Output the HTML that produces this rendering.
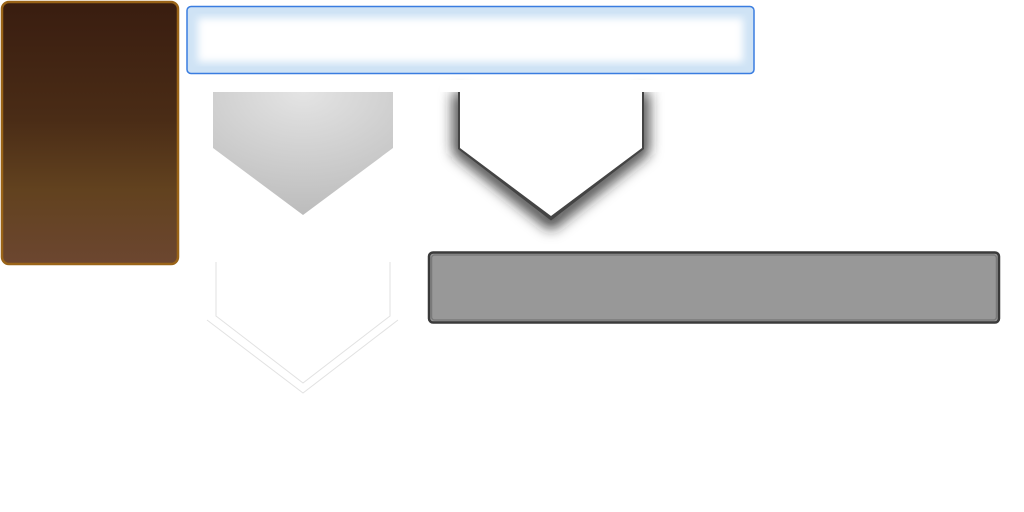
<!DOCTYPE html>
<html><head><meta charset="utf-8"><style>
html,body{margin:0;padding:0;background:#fff;width:1024px;height:512px;overflow:hidden}
</style></head><body>
<svg width="1024" height="512" viewBox="0 0 1024 512" xmlns="http://www.w3.org/2000/svg">
<defs>
<linearGradient id="br" x1="0" y1="0" x2="0" y2="1">
<stop offset="0" stop-color="#391d10"/>
<stop offset="0.45" stop-color="#4a2c16"/>
<stop offset="0.72" stop-color="#62421f"/>
<stop offset="1" stop-color="#6c4630"/>
</linearGradient>
<radialGradient id="gr" cx="0.5" cy="0" r="1">
<stop offset="0" stop-color="#e4e4e4"/>
<stop offset="0.5" stop-color="#d0d0d0"/>
<stop offset="1" stop-color="#bcbcbc"/>
</radialGradient>
<filter id="bl" x="-30%" y="-30%" width="160%" height="160%"><feGaussianBlur stdDeviation="7"/></filter>
<filter id="bl2"><feGaussianBlur stdDeviation="4"/></filter>
</defs>
<rect x="2" y="2" width="176" height="262" rx="7" fill="url(#br)" stroke="#9a6418" stroke-width="2.5"/>
<rect x="187" y="6.5" width="567" height="67" rx="4" fill="#cfe3f5" stroke="#3a7de0" stroke-width="1.5"/>
<rect x="198" y="18" width="545" height="44" fill="#fff" filter="url(#bl2)"/>
<path d="M213 92 H393 V148 L303 215 L213 148 Z" fill="url(#gr)"/>
<path d="M460 92 V150 L551 222 L642 150 V92" fill="none" stroke="#222" stroke-width="12" filter="url(#bl)"/>
<path d="M460 92 V148 L551 218 L642 148 V92" fill="none" stroke="#444" stroke-width="4"/>
<rect x="440" y="80" width="230" height="12" fill="#fff"/>
<path d="M460 92 V148 L551 216 L642 148 V92 Z" fill="#fff"/>
<path d="M216 262 V316 L303 383 L390 316 V262" fill="none" stroke="#e2e2e2" stroke-width="1"/>
<path d="M207 320 L303 393 L398 320" fill="none" stroke="#e2e2e2" stroke-width="1"/>
<rect x="429" y="252.5" width="570" height="70" rx="4" fill="#989898" stroke="#3a3a3a" stroke-width="2.5"/>
<rect x="431.5" y="255" width="565" height="65" rx="3" fill="none" stroke="#7a7a7a" stroke-width="1.5"/>
</svg>
</body></html>
